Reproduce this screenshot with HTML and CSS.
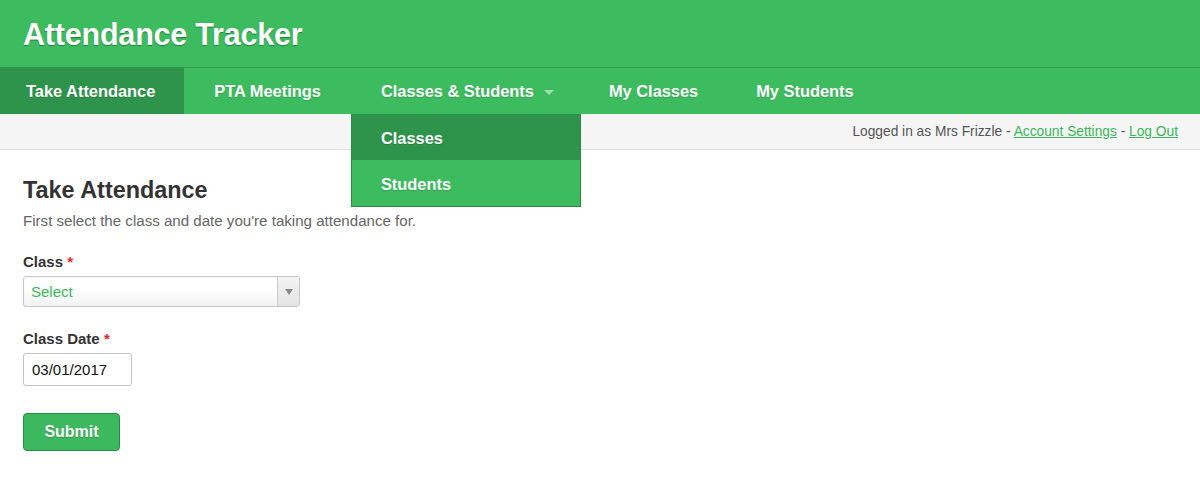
FILE: index.html
```html
<!DOCTYPE html>
<html>
<head>
<meta charset="utf-8">
<link rel="stylesheet" href="styles.css">
</head>
<body>
<header class="masthead">
  <h1 class="brand">Attendance Tracker</h1>
</header>
<nav class="mainnav">
  <a class="navitem active">Take Attendance</a>
  <a class="navitem wide">PTA Meetings</a>
  <div class="navdrop">
    <a class="navitem droptoggle">Classes &amp; Students <span class="caret"></span></a>
    <div class="dropmenu">
      <a class="dropitem current">Classes</a>
      <a class="dropitem">Students</a>
    </div>
  </div>
  <a class="navitem">My Classes</a>
  <a class="navitem">My Students</a>
</nav>
<div class="userbar">
  <span class="usertext">Logged in as Mrs Frizzle - <a class="ulink">Account Settings</a> - <a class="ulink">Log Out</a></span>
</div>
<main class="content">
  <h2 class="pagetitle">Take Attendance</h2>
  <p class="intro">First select the class and date you're taking attendance for.</p>
  <div class="field">
    <label class="flabel">Class <span class="req">*</span></label>
    <div class="select">
      <span class="selval">Select</span>
      <span class="selarrow"><span class="tri"></span></span>
    </div>
  </div>
  <div class="field field-date">
    <label class="flabel">Class Date <span class="req">*</span></label>
    <div class="dateinput">03/01/2017</div>
  </div>
  <button class="submit">Submit</button>
</main>
</body>
</html>
```
FILE: styles.css
```css
* { box-sizing: border-box; }
body {
  margin: 0;
  font-family: "Liberation Sans", Arial, sans-serif;
  background: #fff;
  color: #333;
}
.masthead {
  background: #3cbc5f;
  height: 68px;
  border-bottom: 1px solid #2e9a4c;
  padding: 0 23px;
  display: flex;
  align-items: center;
}
.brand {
  margin: 0;
  color: #fff;
  font-size: 30.5px;
  font-weight: bold;
  text-shadow: 0 1px 1px rgba(0,0,0,0.35);
  letter-spacing: -0.2px;
  padding-top: 2px;
}
.mainnav {
  background: #3cbc5f;
  height: 46px;
  display: flex;
  align-items: stretch;
}
.navitem {
  display: flex;
  align-items: center;
  padding: 1px 29px 0;
  color: #fff;
  font-weight: bold;
  font-size: 16.4px;
  text-shadow: 0 1px 1px rgba(0,0,0,0.15);
  white-space: nowrap;
  cursor: pointer;
}
.navitem.wide {
  padding: 1px 30px 0;
}
.navitem.droptoggle {
  padding: 1px 26px 0 30px;
}
.navitem.active {
  background: #2e944c;
  padding: 1px 29px 0 26px;
}
.navdrop {
  position: relative;
  display: flex;
}
.caret {
  display: inline-block;
  width: 0;
  height: 0;
  margin-left: 10px;
  border-left: 5px solid transparent;
  border-right: 5px solid transparent;
  border-top: 5px solid #9ee0ae;
  margin-top: 2px;
}
.dropmenu {
  position: absolute;
  top: 46px;
  left: 0;
  width: 230px;
  background: #3cbc5f;
  border: 1px solid #2a8a44;
  border-top: none;
  z-index: 5;
  display: flex;
  flex-direction: column;
}
.dropitem {
  height: 46px;
  display: flex;
  align-items: center;
  padding: 2px 0 0 29px;
  color: #fff;
  font-weight: bold;
  font-size: 16.4px;
  text-shadow: 0 1px 1px rgba(0,0,0,0.15);
}
.dropitem.current {
  background: #2e944c;
}
.userbar {
  background: #f5f5f5;
  border-bottom: 1px solid #dedede;
  height: 36px;
  display: flex;
  align-items: center;
  justify-content: flex-end;
  padding: 0 22px;
}
.usertext {
  font-size: 13.75px;
  color: #555;
  white-space: nowrap;
}
.ulink {
  color: #3cb55c;
  text-decoration: underline;
}
.content {
  padding: 27px 23px 0;
}
.pagetitle {
  margin: 0;
  font-size: 23.4px;
  font-weight: bold;
  color: #333;
  line-height: 26px;
}
.intro {
  margin: 9px 0 0;
  font-size: 15.1px;
  color: #666;
  line-height: 18px;
}
.field {
  margin-top: 23px;
}
.field-date {
  margin-top: 23px;
}
.flabel {
  display: block;
  font-size: 15px;
  font-weight: bold;
  color: #333;
  line-height: 18px;
}
.req {
  color: #e0262d;
}
.select {
  margin-top: 5px;
  width: 277px;
  height: 31px;
  border: 1px solid #c8c8c8;
  border-radius: 3px;
  display: flex;
  background: linear-gradient(#fff 40%, #f2f2f2);
  box-shadow: inset 0 1px 2px rgba(0,0,0,0.05);
}
.selval {
  flex: 1;
  display: flex;
  align-items: center;
  padding-left: 7px;
  font-size: 15px;
  color: #3cb55c;
}
.selarrow {
  width: 22px;
  border-left: 1px solid #ccc;
  background: linear-gradient(#f4f4f4, #e3e3e3);
  display: flex;
  align-items: center;
  justify-content: center;
  border-radius: 0 3px 3px 0;
}
.tri {
  width: 0;
  height: 0;
  border-left: 4px solid transparent;
  border-right: 4px solid transparent;
  border-top: 6px solid #888;
}
.dateinput {
  margin-top: 5px;
  width: 109px;
  height: 33px;
  border: 1px solid #c4c4c4;
  border-radius: 3px;
  display: flex;
  align-items: center;
  padding-left: 8px;
  font-size: 15px;
  color: #111;
}
.submit {
  margin-top: 27px;
  width: 97px;
  height: 38px;
  background: #3cb85e;
  border: 1px solid #2a8a44;
  border-radius: 4px;
  color: #fff;
  font-family: "Liberation Sans", Arial, sans-serif;
  font-weight: bold;
  font-size: 16px;
  text-shadow: 0 1px 1px rgba(0,0,0,0.2);
  padding: 0;
}
```
